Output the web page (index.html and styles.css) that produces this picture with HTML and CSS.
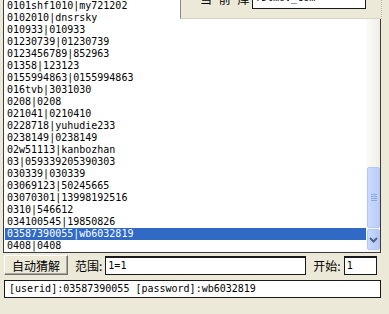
FILE: index.html
```html
<!DOCTYPE html>
<html lang="zh">
<head>
    <meta charset="UTF-8">
    <title>自动猜解</title>
    <link rel="stylesheet" href="styles.css">
</head>
<body>
    <div class="window">
        <!-- 帳號列表 -->
        <div class="listbox">
            <div class="rows">
                <div class="row">0101shf1010|my721202</div>
                <div class="row">0102010|dnsrsky</div>
                <div class="row">010933|010933</div>
                <div class="row">01230739|01230739</div>
                <div class="row">0123456789|852963</div>
                <div class="row">01358|123123</div>
                <div class="row">0155994863|0155994863</div>
                <div class="row">016tvb|3031030</div>
                <div class="row">0208|0208</div>
                <div class="row">021041|0210410</div>
                <div class="row">0228718|yuhudie233</div>
                <div class="row">0238149|0238149</div>
                <div class="row">02w51113|kanbozhan</div>
                <div class="row">03|059339205390303</div>
                <div class="row">030339|030339</div>
                <div class="row">03069123|50245665</div>
                <div class="row">03070301|13998192516</div>
                <div class="row">0310|546612</div>
                <div class="row">034100545|19850826</div>
                <div class="row sel">03587390055|wb6032819</div>
                <div class="row">0408|0408</div>
            </div>
            <div class="scrollbar">
                <div class="track"></div>
                <div class="thumb"><span></span><span></span><span></span><span></span></div>
                <div class="arrow">
                    <svg width="9" height="6" viewBox="0 0 9 6"><path d="M1 1 L4.5 4.5 L8 1" fill="none" stroke="#4d6185" stroke-width="2"/></svg>
                </div>
            </div>
        </div>

        <!-- 猜解設定 -->
        <div class="controls">
            <button class="btn">自动猜解</button>
            <span class="label">范围:</span>
            <div class="field wide">1=1</div>
            <span class="label">开始:</span>
            <div class="field short">1</div>
        </div>

        <div class="result">[userid]:03587390055 [password]:wb6032819</div>
    </div>

    <!-- 上方的資料庫面板 -->
    <div class="dbpanel">
        <span class="dblabel">当 前 库:</span>
        <div class="dbfield">fstmov_com</div>
    </div>
</body>
</html>
```

FILE: styles.css
```css
body {
    margin: 0;
    width: 389px;
    height: 314px;
    overflow: hidden;
    background-color: #ece9d8;
    font-family: "Noto Sans CJK SC", sans-serif;
    position: relative;
}

.window {
    padding: 0 8px 0 3px;
}

.listbox {
    display: flex;
    height: 252px;
    background-color: #fff;
    border: 1px solid #3c3c3c;
    border-top: none;
}

.rows {
    flex: 1;
    padding-left: 1px;
}

.row {
    height: 12px;
    line-height: 12px;
    padding-left: 2px;
    font-family: "DejaVu Sans Mono", monospace;
    font-size: 10px;
    color: #000;
    white-space: nowrap;
}

.row.sel {
    background-color: #316ac5;
    color: #fff;
}

.scrollbar {
    width: 14px;
    display: flex;
    flex-direction: column;
    padding-bottom: 2px;
    background: linear-gradient(to right, #fbfbf9, #f0eee6);
}

.track {
    flex: 1;
}

.thumb {
    height: 59px;
    margin: 0 0 1px 1px;
    background: linear-gradient(to right, #cbdaff, #b9cdf9);
    border: 1px solid #b4c8f6;
    border-radius: 2px;
    display: flex;
    flex-direction: column;
    align-items: center;
    justify-content: center;
    gap: 1px;
}

.thumb span {
    width: 6px;
    height: 1px;
    background-color: #8ea7e2;
}

.arrow {
    height: 19px;
    margin-left: 1px;
    background: linear-gradient(to right, #cbdaff, #b4c8f6);
    border: 1px solid #b4c8f6;
    border-radius: 2px;
    display: flex;
    align-items: center;
    justify-content: center;
}

.controls {
    display: flex;
    align-items: center;
    height: 20px;
    margin-top: 2px;
    padding-left: 1px;
}

.btn {
    width: 64px;
    height: 20px;
    padding: 0;
    font-family: "Noto Sans CJK SC", sans-serif;
    font-size: 12px;
    color: #000;
    background-color: #ece9d8;
    border: 1px solid;
    border-color: #fff #6f6f6f #6f6f6f #fff;
    box-shadow: inset -1px -1px #aca899;
}

.label {
    font-size: 12px;
    color: #000;
    margin: 0 3px 0 7px;
}

.field {
    height: 16px;
    line-height: 16px;
    font-family: "DejaVu Sans Mono", monospace;
    font-size: 10px;
    background-color: #fff;
    border: 1px solid #1a1a1a;
    border-top-width: 2px;
    padding-left: 2px;
    box-sizing: content-box;
}

.field.wide {
    width: 197px;
}

.field.short {
    width: 29px;
}

.result {
    margin-top: 5px;
    margin-left: 1px;
    height: 16px;
    line-height: 16px;
    padding-left: 4px;
    background-color: #fff;
    border: 1px solid #1a1a1a;
    font-family: "DejaVu Sans Mono", monospace;
    font-size: 10px;
}

/* 蓋在列表上方的面板 */
.dbpanel {
    position: absolute;
    left: 180px;
    top: 0;
    width: 200px;
    height: 18px;
    background-color: #ece9d8;
    border-left: 1px solid #8a8a80;
    border-bottom: 1px solid #d8d5c8;
    border-right: 1px dotted #b8b5a8;
    overflow: hidden;
}

.dblabel {
    position: absolute;
    left: 19px;
    top: -10px;
    font-size: 12px;
    color: #000;
    letter-spacing: 2px;
}

.dbfield {
    position: absolute;
    left: 71px;
    top: -9px;
    width: 110px;
    height: 16px;
    line-height: 12px;
    padding-left: 2px;
    background-color: #fff;
    border: 1px solid #1a1a1a;
    font-family: "DejaVu Sans Mono", monospace;
    font-size: 10px;
}
```
